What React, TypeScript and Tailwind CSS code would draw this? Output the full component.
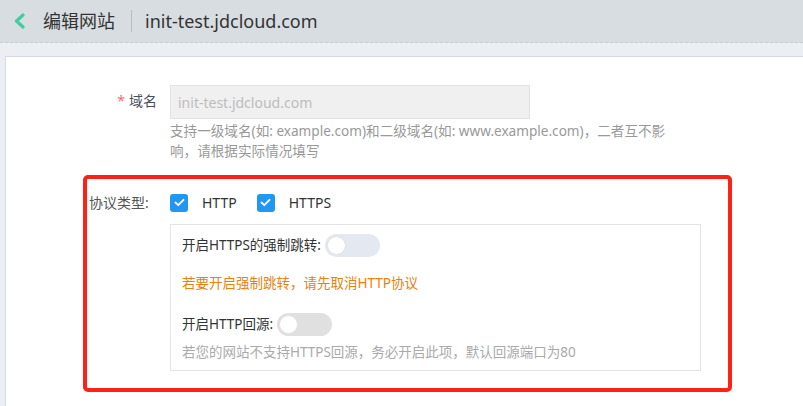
import React from "react";

const font = { fontFamily: '"Noto Sans", "Noto Sans CJK SC", sans-serif' };

function Check() {
  return (
    <span className="flex h-[18px] w-[18px] items-center justify-center rounded-[3px] bg-[#2196f3]">
      <svg width="11" height="9" viewBox="0 0 11 9" fill="none">
        <path d="M1.5 4.5 L4.3 7.2 L9.5 1.8" stroke="white" strokeWidth="1.8" strokeLinecap="round" strokeLinejoin="round" />
      </svg>
    </span>
  );
}

function Toggle({ bg }: { bg: string }) {
  return (
    <span className={`relative inline-block h-[23px] w-[55px] rounded-full ${bg}`}>
      <span className="absolute left-[2px] top-[2px] h-[19px] w-[19px] rounded-full border border-[#e2e2e2] bg-white" />
    </span>
  );
}

export default function App() {
  return (
    <div className="relative h-[406px] w-[803px] overflow-hidden bg-[#ebeff3]" style={font}>
      {/* header */}
      <div className="flex h-[43px] items-center border-b border-dashed border-[#c8cdd2] bg-[#d8dde1]">
        <svg className="ml-[13px]" width="13" height="16" viewBox="0 0 13 16" fill="none">
          <path d="M10 2 L3.5 8 L10 14" stroke="#3ccf9f" strokeWidth="3.2" strokeLinecap="round" strokeLinejoin="round" />
        </svg>
        <span className="ml-[17px] text-[18px] leading-none text-[#333]">编辑网站</span>
        <span className="ml-[16px] h-[22px] w-px bg-[#b9bec3]" />
        <span className="ml-[13px] text-[18px] leading-none text-[#333]">init-test.jdcloud.com</span>
      </div>

      {/* card */}
      <div className="ml-[5px] mt-[13px] h-[400px] border-l border-t border-[#d3dbe4] bg-white">
        {/* domain row */}
        <div className="mt-[28px] flex">
          <div className="w-[164px] pr-[13px] pt-[6px] text-right text-[14px] leading-[20px] text-[#4a4f5a]">
            <span className="mr-[4px] text-[#f56c6c]">*</span>域名
          </div>
          <div>
            <div className="flex h-[34px] w-[360px] items-center border border-[#e2e2e2] bg-[#f0f0f0] px-[7px] text-[14px] text-[#bdbdbd]">
              init-test.jdcloud.com
            </div>
            <div className="mt-[2px] whitespace-nowrap text-[13.6px] leading-[19.5px] text-[#999]">
              支持一级域名(如: example.com)和二级域名(如: www.example.com)，二者互不影
              <br />
              响，请根据实际情况填写
            </div>
          </div>
        </div>

        {/* protocol row */}
        <div className="mt-[32px] flex items-center">
          <div className="w-[164px] pl-[83px] text-[14px] leading-[20px] text-[#555]">协议类型:</div>
          <Check />
          <span className="ml-[14px] text-[14px] text-[#333]">HTTP</span>
          <span className="ml-[20px]"><Check /></span>
          <span className="ml-[14px] text-[14px] text-[#333]">HTTPS</span>
        </div>

        {/* inner box */}
        <div className="ml-[164px] mt-[11px] h-[147px] w-[531px] border border-[#e4e4e4] px-[11px] pt-[9px]">
          <div className="flex items-center gap-[4px] text-[13.5px] text-[#333]">
            <span>开启HTTPS的强制跳转:</span>
            <Toggle bg="bg-[#e4e8f1]" />
          </div>
          <div className="mt-[16px] text-[13.5px] leading-[20px] text-[#e8820c]">若要开启强制跳转，请先取消HTTP协议</div>
          <div className="mt-[20px] flex items-center gap-[4px] text-[13.5px] text-[#333]">
            <span>开启HTTP回源:</span>
            <Toggle bg="bg-[#e0e0e0]" />
          </div>
          <div className="mt-[6px] text-[13.5px] leading-[20px] text-[#aaa]">若您的网站不支持HTTPS回源，务必开启此项，默认回源端口为80</div>
        </div>
      </div>

      {/* red annotation box */}
      <div className="pointer-events-none absolute left-[83px] top-[175px] h-[217px] w-[649px] rounded-[5px] border-[4px] border-[#ff2115]" />
    </div>
  );
}
